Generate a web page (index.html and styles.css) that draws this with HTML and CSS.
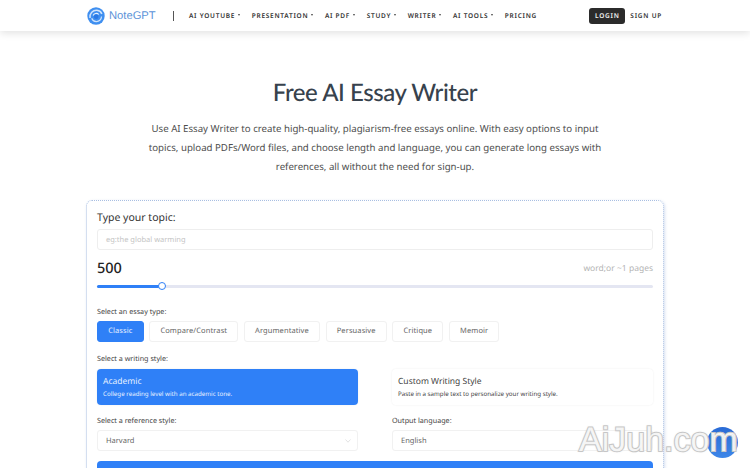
FILE: index.html
```html
<!DOCTYPE html>
<html lang="en">
<head>
    <meta charset="UTF-8">
    <title>Free AI Essay Writer</title>
    <link rel="stylesheet" href="styles.css">
</head>
<body>
    <header class="topbar">
        <a class="logo">
            <svg width="18" height="18" viewBox="0 0 18 18">
                <circle cx="9" cy="9" r="8.700" fill="#3f8ff0"/>
                <path d="M3 11C2.300 6.500 6 2.900 10 3.300c2.500.3 4.200 1.800 4.800 3.700" fill="none" stroke="#cfe3fb" stroke-width="1.500"/>
                <path d="M14.500 9.500c0 3.200-2.600 5.200-5.200 5.100-2.300-.1-4-1.500-4.600-3.300" fill="none" stroke="#cfe3fb" stroke-width="1.200"/>
                <path d="M6.200 8.500C7 6.300 10 5.500 11.800 7.500" fill="none" stroke="#e6f1fe" stroke-width="1.100"/>
                <circle cx="9.200" cy="9.800" r="2.300" fill="#2a78e4"/>
            </svg>
            <span>NoteGPT</span>
        </a>
        <span class="divider"></span>
        <nav class="menu">
            <a class="caret">AI YOUTUBE</a>
            <a class="caret">PRESENTATION</a>
            <a class="caret">AI PDF</a>
            <a class="caret">STUDY</a>
            <a class="caret">WRITER</a>
            <a class="caret">AI TOOLS</a>
            <a>PRICING</a>
        </nav>
        <div class="auth">
            <a class="login">LOGIN</a>
            <a class="signup">SIGN UP</a>
        </div>
    </header>

    <main>
        <h1>Free AI Essay Writer</h1>
        <p class="intro">Use AI Essay Writer to create high-quality, plagiarism-free essays online. With easy options to input topics, upload PDFs/Word files, and choose length and language, you can generate long essays with references, all without the need for sign-up.</p>

        <section class="card">
            <div class="topic-label">Type your topic:</div>
            <div class="topic-input">eg:the global warming</div>

            <div class="count-row">
                <span class="count">500</span>
                <span class="pages">word;or ~1 pages</span>
            </div>
            <div class="slider">
                <div class="slider-fill"></div>
                <div class="slider-knob"></div>
            </div>

            <div class="small-label type-label">Select an essay type:</div>
            <div class="types">
                <span class="type active">Classic</span>
                <span class="type">Compare/Contrast</span>
                <span class="type">Argumentative</span>
                <span class="type">Persuasive</span>
                <span class="type">Critique</span>
                <span class="type">Memoir</span>
            </div>

            <div class="small-label style-label">Select a writing style:</div>
            <div class="two-col">
                <div class="style-box active">
                    <div class="style-name">Academic</div>
                    <div class="style-desc">College reading level with an academic tone.</div>
                </div>
                <div class="style-box">
                    <div class="style-name">Custom Writing Style</div>
                    <div class="style-desc">Paste in a sample text to personalize your writing style.</div>
                </div>
            </div>

            <div class="two-col select-row">
                <div>
                    <div class="small-label">Select a reference style:</div>
                    <div class="select">Harvard
                        <svg width="6" height="4" viewBox="0 0 6 4"><path d="M.5.500L3 3.200 5.500.500" fill="none" stroke="#dcdcdc" stroke-width=".8"/></svg>
                    </div>
                </div>
                <div>
                    <div class="small-label">Output language:</div>
                    <div class="select">English</div>
                </div>
            </div>

            <div class="generate"></div>
        </section>
    </main>

    <div class="chat-bubble"></div>
    <div class="watermark">AiJuh.com</div>
</body>
</html>
```
FILE: styles.css
```css
* {
    box-sizing: border-box;
}
html, body {
    height: 468px;
    overflow: hidden;
}
body {
    margin: 0;
    font-family: "Noto Sans", sans-serif;
    text-rendering: geometricPrecision;
    background: #fff;
    color: #333;
    position: relative;
}
.topbar {
    height: 31px;
    display: flex;
    align-items: center;
    padding: 0 88px 0 87px;
    background: #fff;
    box-shadow: 0 2px 8px rgba(0, 0, 0, 0.12);
}
.logo {
    display: flex;
    align-items: center;
    gap: 4px;
    width: 86px;
}
.logo span {
    font-family: "Liberation Sans", sans-serif;
    font-size: 11.2px;
    color: #5b93d8;
}
.divider {
    width: 1px;
    height: 10px;
    background: #555;
}
.menu {
    display: flex;
    gap: 11.5px;
    margin-left: 15px;
}
.menu a, .auth a {
    font-size: 6.5px;
    font-weight: 600;
    letter-spacing: 0.75px;
    color: #333;
    white-space: nowrap;
}
.caret::after {
    content: "";
    display: inline-block;
    margin-left: 3px;
    vertical-align: 2px;
    border-left: 1.500px solid transparent;
    border-right: 1.500px solid transparent;
    border-top: 2px solid #444;
}
.auth {
    display: flex;
    align-items: center;
    gap: 5px;
    margin-left: auto;
}
.auth .login {
    width: 36px;
    height: 16px;
    background: #2b2b2b;
    color: #f2f2f2;
    border-radius: 3px;
    text-align: center;
    line-height: 16px;
}
main {
    padding-top: 44px;
}
h1 {
    margin: 0;
    text-align: center;
    font-family: "Lato", sans-serif;
    font-size: 24px;
    line-height: 36px;
    font-weight: 500;
    letter-spacing: -0.45px;
    color: #37424d;
}
.intro {
    width: 470px;
    margin: 8px auto 0;
    text-align: center;
    font-size: 9.67px;
    line-height: 19px;
    color: #4d4d4d;
}
.card {
    width: 578px;
    height: 300px;
    margin: 24px 0 0 86px;
    padding: 11px 10px 0;
    border: 1px dotted #a9bfe2;
    border-radius: 6px;
    box-shadow: 1px 1px 3px rgba(90, 130, 200, 0.25);
}
.topic-label {
    font-size: 10.5px;
    line-height: 13px;
    color: #333;
}
.topic-input {
    height: 21px;
    margin-top: 4px;
    padding-left: 8px;
    border: 1px solid #eee;
    border-radius: 3px;
    font-size: 7.5px;
    line-height: 20px;
    color: #c4c4c4;
}
.count-row {
    display: flex;
    justify-content: space-between;
    align-items: center;
    margin-top: 8px;
}
.count {
    font-size: 14.5px;
    line-height: 20px;
    font-weight: 500;
    color: #222;
}
.pages {
    font-size: 8.5px;
    color: #b4b4b4;
}
.slider {
    position: relative;
    height: 3px;
    margin-top: 7px;
    background: #e4e6f2;
    border-radius: 2px;
}
.slider-fill {
    width: 66px;
    height: 3px;
    background: #2f80f7;
    border-radius: 2px;
}
.slider-knob {
    position: absolute;
    left: 61px;
    top: -3px;
    width: 8px;
    height: 8px;
    background: #fff;
    border: 1px solid #2f80f7;
    border-radius: 50%;
}
.small-label {
    font-size: 7.2px;
    line-height: 11px;
    color: #444;
}
.type-label {
    margin-top: 19px;
}
.types {
    display: flex;
    gap: 5.5px;
    margin-top: 3px;
}
.type {
    height: 21px;
    padding: 0 10.2px;
    border: 1px solid #f1f1f1;
    border-radius: 3px;
    font-size: 7.5px;
    line-height: 19px;
    letter-spacing: 0.1px;
    color: #666;
}
.type.active {
    background: #2f80f7;
    border-color: #2f80f7;
    color: #e8f1ff;
}
.style-label {
    margin-top: 12px;
}
.two-col {
    display: grid;
    grid-template-columns: 261px 261px;
    gap: 34px;
}
.style-box {
    height: 36px;
    margin-top: 4px;
    padding: 6px 6px;
    border-radius: 4px;
    box-shadow: 0 0 2px rgba(0, 0, 0, 0.08);
    color: #444;
}
.style-box.active {
    background: #2f80f7;
    color: #e6f0ff;
}
.style-name {
    font-size: 8.5px;
    line-height: 13px;
}
.style-desc {
    font-size: 6.2px;
    line-height: 12px;
}
.select-row {
    margin-top: 11px;
}
.select {
    display: flex;
    justify-content: space-between;
    align-items: center;
    height: 21px;
    margin-top: 3px;
    padding: 0 6px 0 8px;
    border: 1px solid #f1f1f1;
    border-radius: 3px;
    font-size: 7.5px;
    color: #666;
}
.generate {
    height: 30px;
    margin-top: 10px;
    background: #2f80f7;
    border-radius: 4px;
}
/* screenshot watermark sits on top of the chat button */
.watermark {
    position: absolute;
    left: 579px;
    top: 420px;
    font-family: "Liberation Sans", sans-serif;
    font-size: 34px;
    line-height: 40px;
    color: rgba(255, 255, 255, 0.85);
    -webkit-text-stroke: 2px #cdcdcd;
    paint-order: stroke fill;
    text-shadow: 0 0 2px rgba(150, 150, 150, 0.5);
}
.chat-bubble {
    position: absolute;
    left: 707px;
    top: 427px;
    width: 31px;
    height: 31px;
    border-radius: 50%;
    background: linear-gradient(#2a6bd6, #3d86e8);
}
```
